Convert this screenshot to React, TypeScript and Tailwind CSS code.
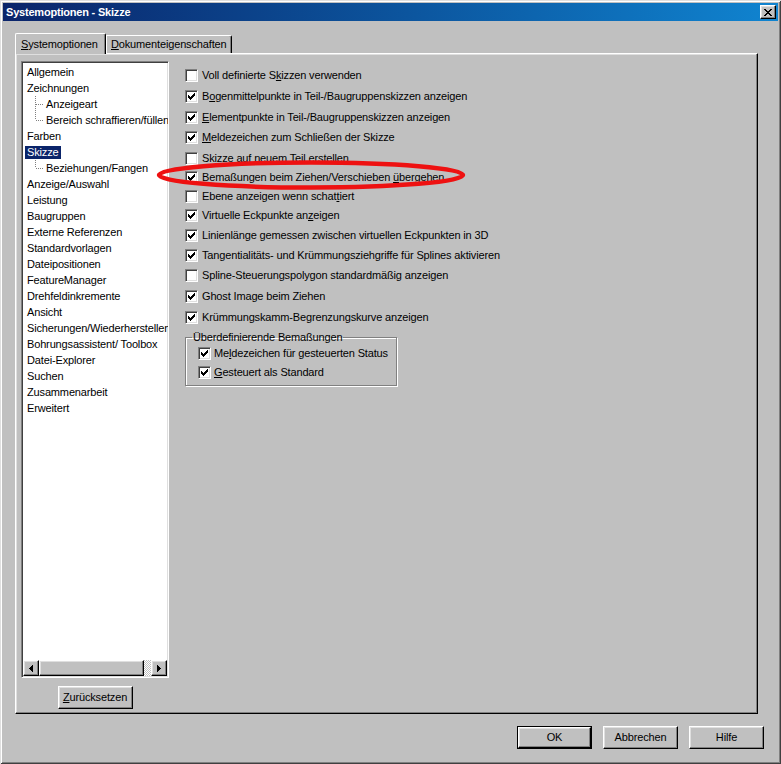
import type { ReactNode } from "react";

const raised =
  "border border-t-white border-l-white border-r-black border-b-black shadow-[inset_-1px_-1px_0_#808080,inset_1px_1px_0_#dfdfdf]";
const sunken =
  "border border-t-[#808080] border-l-[#808080] border-r-white border-b-white shadow-[inset_1px_1px_0_#404040,inset_-1px_-1px_0_#dfdfdf]";

function CheckMark() {
  return (
    <svg width="7" height="7" viewBox="0 0 7 7" shapeRendering="crispEdges">
      <path d="M0 2h1v3H0zM1 3h1v3H1zM2 4h1v3H2zM3 3h1v3H3zM4 2h1v3H4zM5 1h1v3H5zM6 0h1v3H6z" fill="#000" />
    </svg>
  );
}

function Box({ checked }: { checked: boolean }) {
  return (
    <span className={`w-[13px] h-[13px] shrink-0 bg-white flex items-center justify-center ${sunken}`}>
      {checked && <CheckMark />}
    </span>
  );
}

function CloseGlyph() {
  return (
    <svg width="8" height="7" viewBox="0 0 8 7" shapeRendering="crispEdges">
      <path
        d="M0 0h2v1H0zM6 0h2v1H6zM1 1h2v1H1zM5 1h2v1H5zM2 2h4v1H2zM3 3h2v1H3zM2 4h4v1H2zM1 5h2v1H1zM5 5h2v1H5zM0 6h2v1H0zM6 6h2v1H6z"
        fill="#000"
      />
    </svg>
  );
}

function Btn({ children, isDefault }: { children: ReactNode; isDefault?: boolean }) {
  if (isDefault) {
    return (
      <div className="w-[75px] h-[23px] border border-black">
        <div className={`w-full h-full flex items-center justify-center ${raised}`}>{children}</div>
      </div>
    );
  }
  return <div className={`w-[75px] h-[23px] flex items-center justify-center ${raised}`}>{children}</div>;
}

const options: { label: ReactNode; checked: boolean; h: string }[] = [
  { label: <>Voll definierte S<u>k</u>izzen verwenden</>, checked: false, h: "h-[21px]" },
  { label: <>B<u>o</u>genmittelpunkte in Teil-/Baugruppenskizzen anzeigen</>, checked: true, h: "h-[21px]" },
  { label: <><u>E</u>lementpunkte in Teil-/Baugruppenskizzen anzeigen</>, checked: true, h: "h-[20px]" },
  { label: <><u>M</u>eldezeichen zum Schließen der Skizze</>, checked: true, h: "h-[21px]" },
  { label: <>Skizze auf neuem Teil erstellen</>, checked: false, h: "h-[20px]" },
  { label: <>Bemaßungen beim Ziehen/Verschieben <u>ü</u>bergehen</>, checked: true, h: "h-[19px]" },
  { label: <>Ebene anzeigen wenn schat<u>t</u>iert</>, checked: false, h: "h-[19px]" },
  { label: <>Virtuelle Eckpunkte an<u>z</u>eigen</>, checked: true, h: "h-[19px]" },
  { label: <>Linienlänge gemessen zwischen virtuellen Eckpunkten in 3D</>, checked: true, h: "h-[20px]" },
  { label: <>Tangentialitäts- und Krümmungsziehgriffe für Splines aktivieren</>, checked: true, h: "h-[20px]" },
  { label: <>Spline-Steuerungspolygon standardmäßig anzeigen</>, checked: false, h: "h-[21px]" },
  { label: <>Ghost Image beim Ziehen</>, checked: true, h: "h-[21px]" },
  { label: <>Krümmungskamm-Begrenzungskurve anzeigen</>, checked: true, h: "h-[20px]" },
];

const tree: { label: string; level: number; last?: boolean; selected?: boolean }[] = [
  { label: "Allgemein", level: 0 },
  { label: "Zeichnungen", level: 0 },
  { label: "Anzeigeart", level: 1 },
  { label: "Bereich schraffieren/füllen", level: 1, last: true },
  { label: "Farben", level: 0 },
  { label: "Skizze", level: 0, selected: true },
  { label: "Beziehungen/Fangen", level: 1, last: true },
  { label: "Anzeige/Auswahl", level: 0 },
  { label: "Leistung", level: 0 },
  { label: "Baugruppen", level: 0 },
  { label: "Externe Referenzen", level: 0 },
  { label: "Standardvorlagen", level: 0 },
  { label: "Dateipositionen", level: 0 },
  { label: "FeatureManager", level: 0 },
  { label: "Drehfeldinkremente", level: 0 },
  { label: "Ansicht", level: 0 },
  { label: "Sicherungen/Wiederherstellen", level: 0 },
  { label: "Bohrungsassistent/ Toolbox", level: 0 },
  { label: "Datei-Explorer", level: 0 },
  { label: "Suchen", level: 0 },
  { label: "Zusammenarbeit", level: 0 },
  { label: "Erweitert", level: 0 },
];

function TreeLines({ last }: { last?: boolean }) {
  return (
    <svg width="9" height="16" viewBox="0 0 9 16" shapeRendering="crispEdges" className="shrink-0">
      <line x1="0.5" y1="0" x2="0.5" y2={last ? 8 : 16} stroke="#808080" strokeDasharray="1 1" />
      <line x1="1" y1="8.5" x2="9" y2="8.5" stroke="#808080" strokeDasharray="1 1" />
    </svg>
  );
}

export default function App() {
  return (
    <div className="relative w-[781px] h-[764px] flex flex-col bg-[#c0c0c0] text-black text-[11px] leading-[13px] tracking-[-0.15px] font-['Liberation_Sans',Arial,sans-serif] overflow-hidden shadow-[inset_1px_1px_0_#dfdfdf,inset_-1px_-1px_0_#404040,inset_2px_2px_0_#fff,inset_-2px_-2px_0_#808080]">
      {/* Title bar */}
      <div className="mx-[3px] mt-[3px] h-[18px] flex items-center bg-linear-to-r from-[#0a246a] to-[#1084d0]">
        <span className="pl-[3px] font-bold text-white tracking-[-0.2px]">Systemoptionen - Skizze</span>
        <div className={`ml-auto mr-[2px] w-[16px] h-[14px] bg-[#c0c0c0] flex items-center justify-center ${raised}`}>
          <CloseGlyph />
        </div>
      </div>

      {/* Tabs */}
      <div className="mt-[12px] ml-[15px] h-[20px] flex items-end">
        <div className="relative z-10 -mb-px w-[91px] h-[21px] pl-[5px] flex items-center bg-[#c0c0c0] border-t border-l border-r border-t-white border-l-white border-r-black rounded-tl-[2px] rounded-tr-[2px] shadow-[inset_-1px_0_0_#808080]">
          <span><u>S</u>ystemoptionen</span>
        </div>
        <div className="w-[126px] h-[18px] pl-[4px] flex items-center border-t border-l border-r border-t-white border-l-white border-r-black rounded-tr-[2px] shadow-[inset_-1px_0_0_#808080]">
          <span><u>D</u>okumenteigenschaften</span>
        </div>
      </div>

      {/* Tab panel */}
      <div className={`ml-[15px] w-[743px] h-[661px] flex items-start ${raised}`}>
        {/* Tree column */}
        <div className="pt-[7px] pl-[5px] w-[153px] flex flex-col">
          <div className={`w-[148px] h-[617px] bg-white flex flex-col ${sunken}`}>
            <div className="flex-1 overflow-hidden pt-[2px]">
              {tree.map((t) =>
                t.level === 0 ? (
                  <div key={t.label} className="h-[16px] flex items-center pl-[3px] whitespace-nowrap">
                    <span className={t.selected ? "px-[2px] bg-[#0a246a] text-white" : "px-[2px]"}>{t.label}</span>
                  </div>
                ) : (
                  <div key={t.label} className="h-[16px] flex items-center pl-[13px] whitespace-nowrap">
                    <TreeLines last={t.last} />
                    <span className="px-[2px]">{t.label}</span>
                  </div>
                )
              )}
            </div>
            <div className="h-[16px] mx-[1px] mb-[1px] flex">
              <div className={`w-[16px] h-[16px] flex items-center justify-center bg-[#c0c0c0] ${raised}`}>
                <svg width="4" height="7" viewBox="0 0 4 7" shapeRendering="crispEdges">
                  <path d="M0 3.5L4 0v7z" fill="#000" />
                </svg>
              </div>
              <div className={`w-[105px] h-[16px] bg-[#c0c0c0] ${raised}`} />
              <div className="flex-1 h-[16px] bg-[repeating-conic-gradient(#fff_0_25%,#c0c0c0_0_50%)] bg-[length:2px_2px]" />
              <div className={`w-[16px] h-[16px] flex items-center justify-center bg-[#c0c0c0] ${raised}`}>
                <svg width="4" height="7" viewBox="0 0 4 7" shapeRendering="crispEdges">
                  <path d="M4 3.5L0 0v7z" fill="#000" />
                </svg>
              </div>
            </div>
          </div>
          <div className="mt-[8px] self-center">
            <Btn>
              <span><u>Z</u>urücksetzen</span>
            </Btn>
          </div>
        </div>

        {/* Options column */}
        <div className="ml-[16px] pt-[11px] flex flex-col">
          {options.map((o, i) => (
            <div key={i} className={`${o.h} flex items-center gap-[4px] whitespace-nowrap`}>
              <Box checked={o.checked} />
              <span>{o.label}</span>
            </div>
          ))}
          <fieldset className="mt-[4px] w-[212px] border border-[#808080] shadow-[1px_1px_0_#fff,inset_1px_1px_0_#fff] pb-[3px]">
            <legend className="ml-[6px] px-[1px] leading-[13px]">Überdefinierende Bemaßungen</legend>
            <div className="pl-[12px]">
              <div className="h-[19px] flex items-center gap-[3px] whitespace-nowrap">
                <Box checked />
                <span>Me<u>l</u>dezeichen für gesteuerten Status</span>
              </div>
              <div className="h-[19px] flex items-center gap-[3px] whitespace-nowrap">
                <Box checked />
                <span><u>G</u>esteuert als Standard</span>
              </div>
            </div>
          </fieldset>
        </div>
      </div>

      {/* Dialog buttons */}
      <div className="mt-[12px] mr-[17px] flex justify-end gap-[11px]">
        <Btn isDefault>OK</Btn>
        <Btn>Abbrechen</Btn>
        <Btn>Hilfe</Btn>
      </div>

      {/* Red hand-drawn marker */}
      <svg className="absolute left-0 top-0 pointer-events-none" width="781" height="764" viewBox="0 0 781 764">
        <ellipse cx="311" cy="175" rx="152" ry="12.5" fill="none" stroke="#ee1111" strokeWidth="4.5" />
      </svg>
    </div>
  );
}
